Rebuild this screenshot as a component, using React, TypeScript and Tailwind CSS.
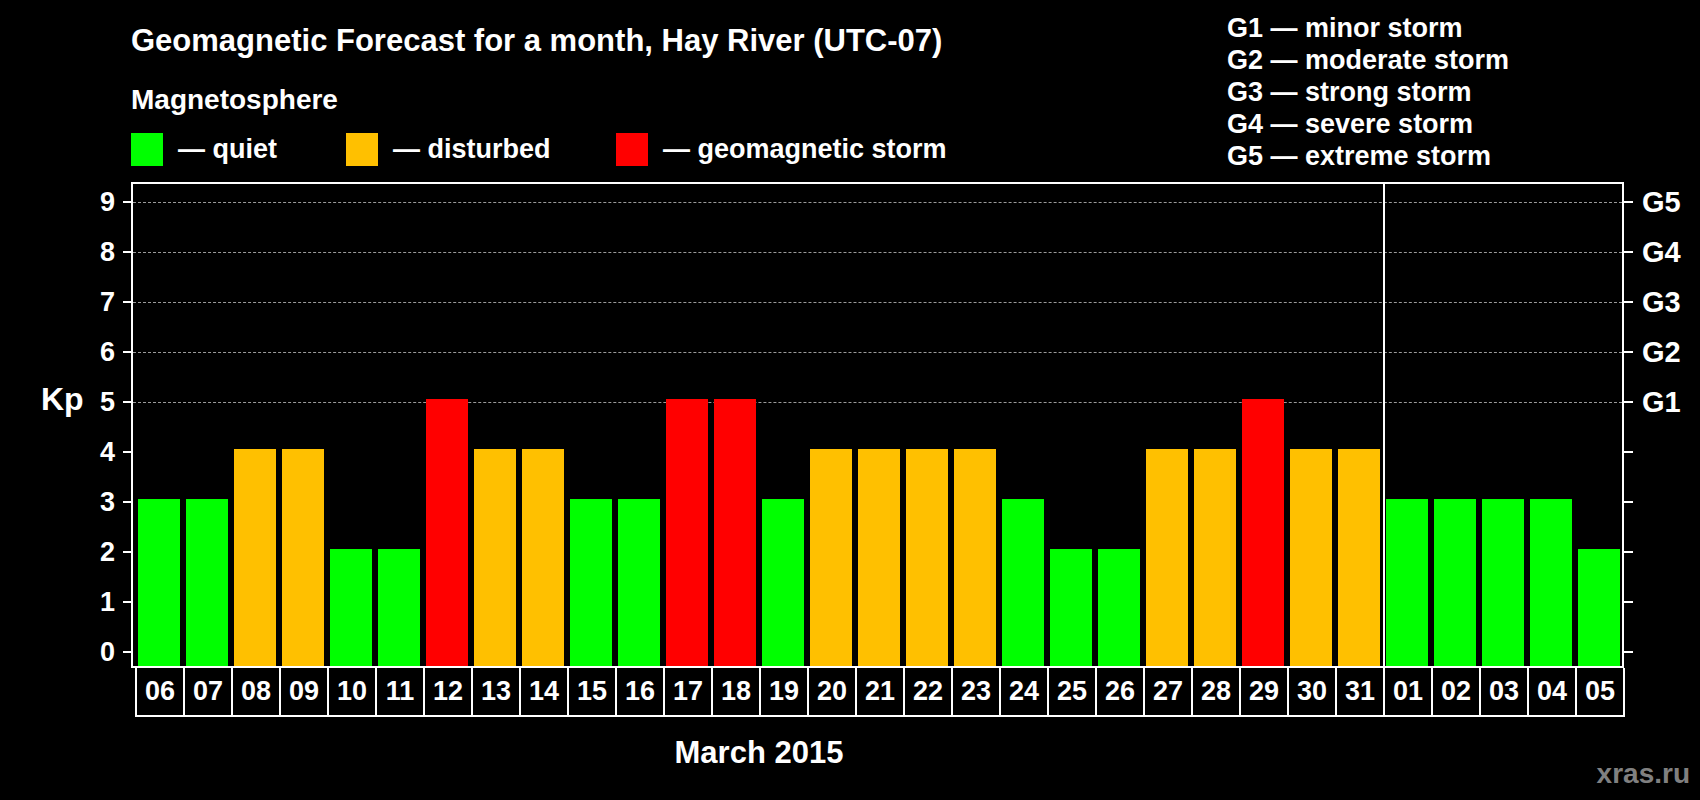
import React from "react";

const days = ["06","07","08","09","10","11","12","13","14","15","16","17","18","19","20","21","22","23","24","25","26","27","28","29","30","31","01","02","03","04","05"];
const vals = [3,3,4,4,2,2,5,4,4,3,3,5,5,3,4,4,4,4,3,2,2,4,4,5,4,4,3,3,3,3,2];
const col = (v: number) => (v >= 5 ? "bg-[#ff0000]" : v >= 4 ? "bg-[#ffc000]" : "bg-[#00ff00]");
const levels = [0,1,2,3,4,5,6,7,8,9];
const gl: Record<number, string> = { 5: "G1", 6: "G2", 7: "G3", 8: "G4", 9: "G5" };

export default function App() {
  return (
    <div className="relative w-[1700px] h-[800px] bg-black text-white font-bold overflow-hidden" style={{ fontFamily: '"Liberation Sans", Arial, sans-serif' }}>
      <div className="flex h-[182px]">
        <div className="w-[1227px] pl-[131px]">
          <div className="mt-[26px] h-[30px] leading-[30px] text-[31px] whitespace-nowrap">Geomagnetic Forecast for a month, Hay River (UTC-07)</div>
          <div className="mt-[30px] h-[28px] leading-[28px] text-[28px]">Magnetosphere</div>
          <div className="mt-[19px] flex items-center h-[33px] text-[27px]">
            <div className="w-[32px] h-[33px] bg-[#00ff00]" />
            <span className="ml-[15px] w-[168px]">— quiet</span>
            <div className="w-[32px] h-[33px] bg-[#ffc000]" />
            <span className="ml-[15px] w-[223px]">— disturbed</span>
            <div className="w-[32px] h-[33px] bg-[#ff0000]" />
            <span className="ml-[15px]">— geomagnetic storm</span>
          </div>
        </div>
        <div className="pt-[12px] text-[27px] leading-[32px] whitespace-nowrap">
          <div>G1 — minor storm</div>
          <div>G2 — moderate storm</div>
          <div>G3 — strong storm</div>
          <div>G4 — severe storm</div>
          <div>G5 — extreme storm</div>
        </div>
      </div>
      <div className="relative">
        <div className="absolute left-[41px] top-[200px] h-[34px] leading-[34px] text-[32px]">Kp</div>
        {levels.map((v) => (
          <React.Fragment key={v}>
            <div className="absolute right-[1585px] h-[30px] leading-[30px] text-[27px]" style={{ top: 470 - 50 * v - 15 }}>{v}</div>
            <div className="absolute left-[123px] w-[8px] h-[2px] bg-white" style={{ top: 469 - 50 * v }} />
            <div className="absolute left-[1624px] w-[9px] h-[2px] bg-white" style={{ top: 469 - 50 * v }} />
            {gl[v] && <div className="absolute left-[1642px] h-[30px] leading-[30px] text-[29px]" style={{ top: 470 - 50 * v - 15 }}>{gl[v]}</div>}
          </React.Fragment>
        ))}
        <div className="relative ml-[131px] w-[1493px] h-[486px] border-2 border-white flex items-end pl-[5px] gap-[6px]">
          {[5,6,7,8,9].map((v) => (
            <div key={v} className="absolute left-0 right-0 border-t border-dashed border-[#9a9a9a]" style={{ top: 468 - 50 * v }} />
          ))}
          <div className="absolute left-[1250px] top-0 bottom-0 w-[2px] bg-white" />
          {vals.map((v, i) => (
            <div key={i} className={`relative w-[42px] ${col(v)}`} style={{ height: 17 + 50 * v }} />
          ))}
        </div>
        <div className="ml-[135px] flex h-[49px] border-b-2 border-r-2 border-white w-[1490px]">
          {days.map((d) => (
            <div key={d} className="w-[48px] border-l-2 border-white flex items-center justify-center text-[27px]">{d}</div>
          ))}
        </div>
        <div className="mt-[19px] h-[34px] leading-[34px] text-[31px] w-[1518px] text-center">March 2015</div>
        <div className="absolute right-[10px] top-[577px] h-[30px] leading-[30px] text-[28px] text-[#808080]">xras.ru</div>
      </div>
    </div>
  );
}
